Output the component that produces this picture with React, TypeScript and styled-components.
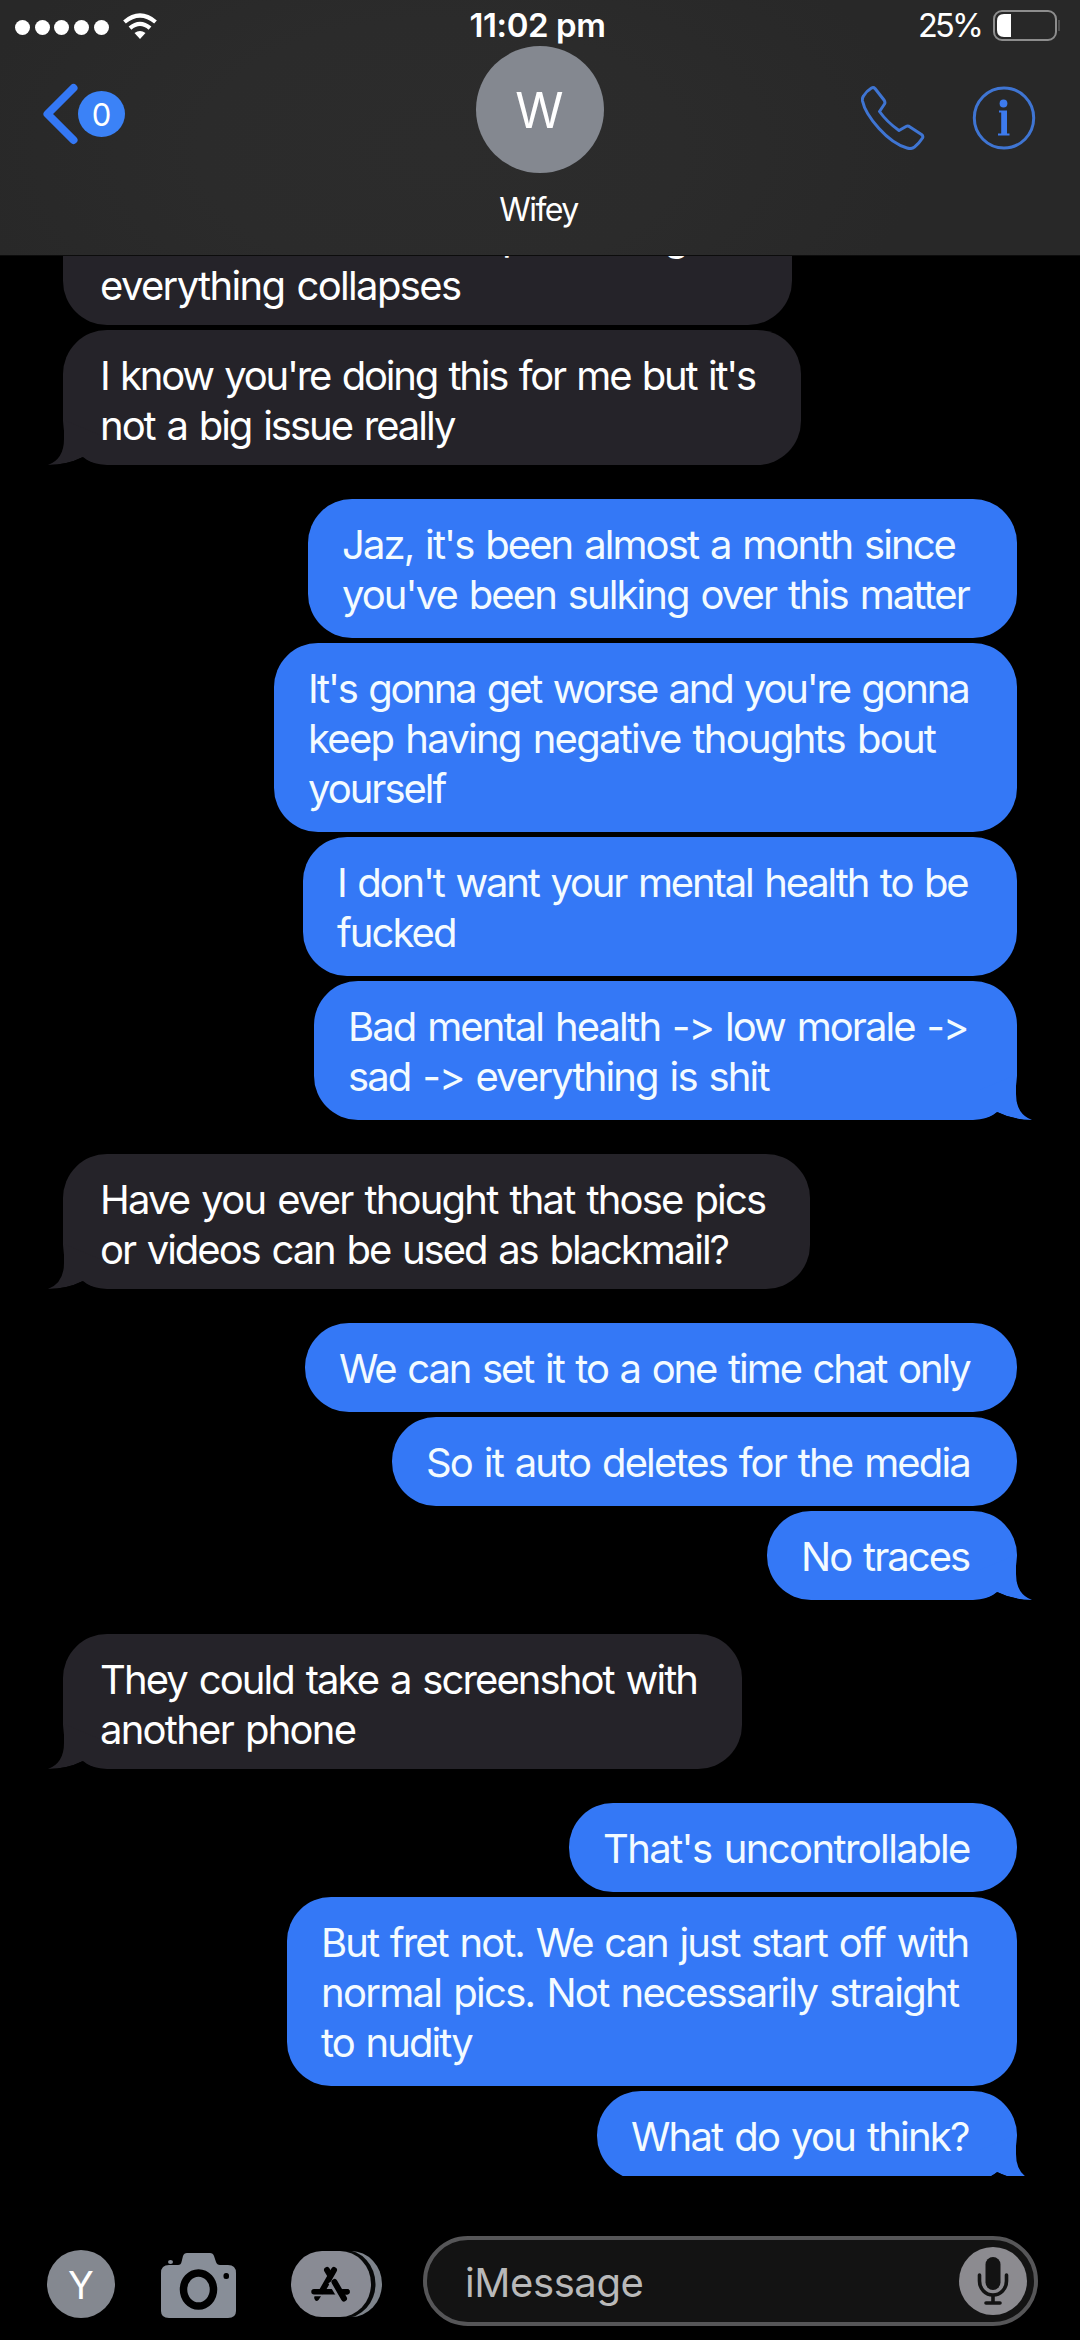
import React from 'react';
import styled, { createGlobalStyle, css } from 'styled-components';

const Global = createGlobalStyle`
  html, body { margin: 0; background: #000; }
  * { box-sizing: border-box; }
`;

const Screen = styled.div`
  width: 1080px;
  height: 2340px;
  display: flex;
  flex-direction: column;
  overflow: hidden;
  background: #000;
  color: #fff;
  font-family: Inter, 'Liberation Sans', sans-serif;
`;

const Header = styled.header`
  height: 256px;
  flex: none;
  display: grid;
  grid-template-rows: 46px 209px;
  background: radial-gradient(ellipse 480px 260px at 440px 150px, #2c2c2c 0%, #2b2b2b 50%, #282828 100%);
  border-bottom: 1px solid #0c0c0c;
`;

const StatusBar = styled.div`
  display: grid;
  grid-template-columns: 1fr auto 1fr;
  align-items: start;
  padding: 0 20px 0 15px;
`;

const Signal = styled.div`
  display: flex;
  align-items: center;
  gap: 4.7px;
  height: 54px;
`;

const Dot = styled.span`
  width: 15px;
  height: 15px;
  border-radius: 50%;
  background: #fff;
`;

const WifiIcon = styled.svg`
  width: 34px;
  height: 28px;
  margin-left: 10px;
`;

const Clock = styled.time`
  font-size: 33px;
  font-weight: 600;
  line-height: 50px;
  letter-spacing: -0.4px;
  white-space: nowrap;
`;

const Power = styled.div`
  display: flex;
  justify-content: flex-end;
  align-items: center;
  height: 50px;
  font-size: 32.5px;
  letter-spacing: -2.8px;
`;

const BatteryIcon = styled.svg`
  width: 67px;
  height: 31px;
  margin-left: 12px;
`;

const NavBar = styled.div`
  display: grid;
  grid-template-columns: 1fr auto 1fr;
  padding: 0 44px 0 43px;
`;

const BackButton = styled.div`
  display: flex;
  align-items: center;
  height: 62px;
  margin-top: 37px;
`;

const BackIcon = styled.svg`
  width: 35px;
  height: 62px;
`;

const Badge = styled.span`
  width: 47px;
  height: 46px;
  border-radius: 50%;
  background: #3b82f7;
  font-size: 31px;
  line-height: 47px;
  text-align: center;
`;

const Contact = styled.div`
  display: flex;
  flex-direction: column;
  align-items: center;
`;

const Avatar = styled.div<{ $large?: boolean }>`
  border-radius: 50%;
  background: #848890;
  text-align: center;
  flex: none;
  ${(p) =>
    p.$large
      ? css`
          width: 128px;
          height: 127px;
          font-size: 49px;
          line-height: 129px;
        `
      : css`
          width: 68px;
          height: 68px;
          font-size: 38px;
          line-height: 70px;
        `}
`;

const Name = styled.div`
  margin-top: 17px;
  padding-right: 2px;
  font-size: 32px;
  line-height: 40px;
  letter-spacing: -1.5px;
`;

const Actions = styled.div`
  display: flex;
  justify-content: flex-end;
  align-items: center;
  gap: 47px;
  height: 64px;
  margin-top: 40px;
`;

const ActionIcon = styled.svg`
  width: 64px;
  height: 64px;
`;

const Thread = styled.main`
  height: 1920px;
  flex: none;
  overflow: hidden;
  display: flex;
  flex-direction: column;
  padding: 0 63px;
`;

const Group = styled.section<{ $mine?: boolean }>`
  display: flex;
  flex-direction: column;
  flex: none;
  gap: 5px;
  margin-bottom: 34px;
  align-items: ${(p) => (p.$mine ? 'flex-end' : 'flex-start')};

  &:first-child {
    margin-top: -66px;
  }
`;

const Bubble = styled.div<{ $mine?: boolean; $width: number }>`
  position: relative;
  flex: none;
  width: ${(p) => p.$width}px;
  border-radius: 44px;
  font-size: 40px;
  line-height: 50px;
  word-spacing: 2.5px;
  white-space: nowrap;
  background: ${(p) => (p.$mine ? '#3478f6' : '#252329')};
  color: ${(p) => (p.$mine ? '#f3fbff' : '#fff')};
  padding: ${(p) => (p.$mine ? '21px 0 18px 34px' : '21px 0 14px 37px')};
`;

const Line = styled.div<{ $tracking: number }>`
  letter-spacing: ${(p) => p.$tracking}px;
`;

const Tail = styled.svg<{ $mine?: boolean }>`
  position: absolute;
  bottom: 0;
  width: 52px;
  height: 60px;
  ${(p) => (p.$mine ? 'right: -15px;' : 'left: -15px; transform: scaleX(-1);')}
`;

const Composer = styled.footer`
  flex: 1;
  display: flex;
  align-items: flex-start;
  padding: 60px 42px 0 47px;
`;

const ComposerIcon = styled.svg<{ $w: number; $h: number; $x: number; $y: number }>`
  flex: none;
  width: ${(p) => p.$w}px;
  height: ${(p) => p.$h}px;
  margin-left: ${(p) => p.$x}px;
  margin-top: ${(p) => p.$y}px;
`;

const AvatarSlot = styled.div`
  margin-top: 14px;
`;

const Field = styled.div`
  flex: 1;
  height: 90px;
  margin-left: 40px;
  display: flex;
  align-items: center;
  justify-content: space-between;
  padding: 0 7px 0 38px;
  border: 4px solid #565658;
  border-radius: 45px;
  background: #131313;
`;

const Placeholder = styled.span`
  padding-top: 3px;
  color: #b9b9b9;
  font-size: 40px;
  line-height: 48px;
  letter-spacing: -0.4px;
`;

const MicIcon = styled.svg`
  width: 68px;
  height: 68px;
`;

type Message = { width: number; lines: [string, number][] };
type Block = { mine?: boolean; messages: Message[] };

const blocks: Block[] = [
  {
    messages: [
      { width: 729, lines: [['I hear that if we do keep counting so', -1.85], ['everything collapses', -1.65]] },
      { width: 738, lines: [["I know you're doing this for me but it's", -2.21], ['not a big issue really', -2]] },
    ],
  },
  {
    mine: true,
    messages: [
      { width: 709, lines: [["Jaz, it's been almost a month since", -1.91], ["you've been sulking over this matter", -1.91]] },
      {
        width: 743,
        lines: [
          ["It's gonna get worse and you're gonna", -2.22],
          ['keep having negative thoughts bout', -1.74],
          ['yourself', -2],
        ],
      },
      { width: 714, lines: [["I don't want your mental health to be", -2.13], ['fucked', -1.95]] },
      { width: 703, lines: [['Bad mental health -> low morale ->', -1.92], ['sad -> everything is shit', -1.86]] },
    ],
  },
  {
    messages: [
      {
        width: 747,
        lines: [
          ['Have you ever thought that those pics', -1.81],
          ['or videos can be used as blackmail?', -2.02],
        ],
      },
    ],
  },
  {
    mine: true,
    messages: [
      { width: 712, lines: [['We can set it to a one time chat only', -2.07]] },
      { width: 625, lines: [['So it auto deletes for the media', -1.86]] },
      { width: 250, lines: [['No traces', -1.95]] },
    ],
  },
  {
    messages: [
      { width: 679, lines: [['They could take a screenshot with', -1.91], ['another phone', -1.75]] },
    ],
  },
  {
    mine: true,
    messages: [
      { width: 448, lines: [["That's uncontrollable", -1.6]] },
      {
        width: 730,
        lines: [
          ['But fret not. We can just start off with', -1.95],
          ['normal pics. Not necessarily straight', -1.71],
          ['to nudity', -1.94],
        ],
      },
      { width: 420, lines: [['What do you think?', -1.81]] },
    ],
  },
];

function BubbleTail({ mine }: { mine?: boolean }) {
  return (
    <Tail $mine={mine} viewBox="0 0 52 60">
      <path d="M0 30 V60 Q10 58 17 52 Q33 60 52 60 Q36 54 36 34 V15 Z" fill={mine ? '#3478f6' : '#252329'} />
      <path d="M-9 60 Q8 60 17 52 Q33 60 52 60 Z" fill="#000" />
    </Tail>
  );
}

export default function App() {
  return (
    <Screen>
      <Global />
      <Header>
        <StatusBar>
          <Signal>
            <Dot />
            <Dot />
            <Dot />
            <Dot />
            <Dot />
            <WifiIcon viewBox="0 0 34 28" fill="none" stroke="#fff" strokeWidth="4.2">
              <path d="M1.5 9 Q17 -4 32.500 9" />
              <path d="M7 15.200 Q17 6.500 27 15.200" />
              <path d="M11.500 20 Q17 16 22.500 20 L17 26 Z" fill="#fff" stroke="none" />
            </WifiIcon>
          </Signal>
          <Clock>11:02 pm</Clock>
          <Power>
            25%
            <BatteryIcon viewBox="0 0 67 31">
              <rect x="1" y="1" width="62" height="29" rx="8" fill="none" stroke="#8d8d8d" strokeWidth="2" />
              <path d="M11 4 H18 V27 H11 Q4 27 4 20 V11 Q4 4 11 4Z" fill="#fff" />
              <path d="M66 10 V21" stroke="#777" strokeWidth="1" />
            </BatteryIcon>
          </Power>
        </StatusBar>
        <NavBar>
          <BackButton>
            <BackIcon viewBox="0 0 35 62" fill="none" stroke="#3478f6" strokeWidth="8" strokeLinecap="round" strokeLinejoin="round">
              <path d="M30.500 5 L4.500 31 L30.500 57" />
            </BackIcon>
            <Badge>0</Badge>
          </BackButton>
          <Contact>
            <Avatar $large>W</Avatar>
            <Name>Wifey</Name>
          </Contact>
          <Actions>
            <ActionIcon viewBox="0 0 64 64" fill="none" stroke="#3f75d3" strokeWidth="3" strokeLinejoin="round">
              <path d="M14 2.500 Q12.500 1 10.500 2 Q5.500 5 2.500 10 Q1 12 1.500 15 Q4 27 18 42.500 Q32 58 46 62 Q50 63.500 53.500 61 Q58 57.500 61.500 52 Q62.500 50 60.500 48.500 L49 41 Q47 39.500 45 40.500 L38 44.500 Q26 36 18.500 25.500 L23.500 18 Q24.500 16 23 14 Z" />
            </ActionIcon>
            <ActionIcon viewBox="0 0 64 64">
              <ellipse cx="32" cy="32" rx="29.700" ry="30" fill="none" stroke="#3f75d3" strokeWidth="3" />
              <circle cx="31.500" cy="17.500" r="3.900" fill="#3d7bee" />
              <path d="M27 24.500 H35 V47.500 H37.500 V49.500 H26 V47.500 H29.200 V26.500 H27 Z" fill="#3d7bee" />
            </ActionIcon>
          </Actions>
        </NavBar>
      </Header>

      <Thread>
        {blocks.map((block, b) => (
          <Group key={b} $mine={block.mine}>
            {block.messages.map((message, m) => (
              <Bubble key={m} $mine={block.mine} $width={message.width}>
                {m === block.messages.length - 1 && <BubbleTail mine={block.mine} />}
                {message.lines.map(([text, tracking]) => (
                  <Line key={text} $tracking={tracking}>
                    {text}
                  </Line>
                ))}
              </Bubble>
            ))}
          </Group>
        ))}
      </Thread>

      <Composer>
        <AvatarSlot>
          <Avatar>Y</Avatar>
        </AvatarSlot>
        <ComposerIcon $w={75} $h={66} $x={46} $y={17} viewBox="0 0 75 66">
          <path
            d="M8 12 H17 Q20 12 20.500 9 L22 3 Q23 0 26 0 H49 Q52 0 53 3 L55 9 Q56 12 59 12 H67 Q75 12 75 20 V58 Q75 65 67 65 H8 Q0 65 0 58 V20 Q0 12 8 12Z"
            fill="#888e98"
          />
          <ellipse cx="9.500" cy="9" rx="2.500" ry="2" fill="#888e98" />
          <ellipse cx="37.500" cy="36.500" rx="15" ry="16.500" fill="none" stroke="#000" strokeWidth="7.500" />
          <rect x="62.500" y="20" width="5.500" height="6" rx="2.500" fill="#000" />
        </ComposerIcon>
        <ComposerIcon $w={92} $h={66} $x={55} $y={15} viewBox="0 0 92 66">
          <rect x="11" y="0" width="80" height="66" rx="31" ry="33" fill="#7e848c" />
          <rect x="4.500" y="-1" width="80" height="68" rx="31" ry="34" fill="#070808" />
          <rect x="0" y="-1" width="30" height="68" fill="#000" />
          <rect x="0" y="0" width="80" height="66" rx="31" ry="33" fill="#898b94" />
          <g stroke="#000" strokeWidth="6" strokeLinecap="round" fill="none">
            <path d="M36 19 L39 24" />
            <path d="M43 19 L31 40" />
            <path d="M23 40.800 H56" strokeWidth="5.400" />
          </g>
          <path d="M41 30 L53 50" stroke="#898b94" strokeWidth="8.500" />
          <path d="M43.500 31 L53 47.500" stroke="#000" strokeWidth="6" strokeLinecap="round" />
          <path d="M53 40.800 H56" stroke="#000" strokeWidth="5.400" strokeLinecap="round" />
          <path d="M23.500 45.200 H30 L27.500 49 Q25.500 51 24 49 Q22.500 47 23.500 45.200Z" fill="#000" />
        </ComposerIcon>
        <Field>
          <Placeholder>iMessage</Placeholder>
          <MicIcon viewBox="0 0 68 68">
            <circle cx="34" cy="34" r="34" fill="#8c8b90" />
            <rect x="26.500" y="10" width="15" height="33" rx="7.500" fill="#131313" />
            <path d="M20.500 28 V34 A13.500 14 0 0 0 47.500 34 V28" fill="none" stroke="#131313" strokeWidth="3.600" strokeLinecap="round" />
            <path d="M34 49 V56 M27 56 H41" stroke="#131313" strokeWidth="3.600" strokeLinecap="round" />
          </MicIcon>
        </Field>
      </Composer>
    </Screen>
  );
}
